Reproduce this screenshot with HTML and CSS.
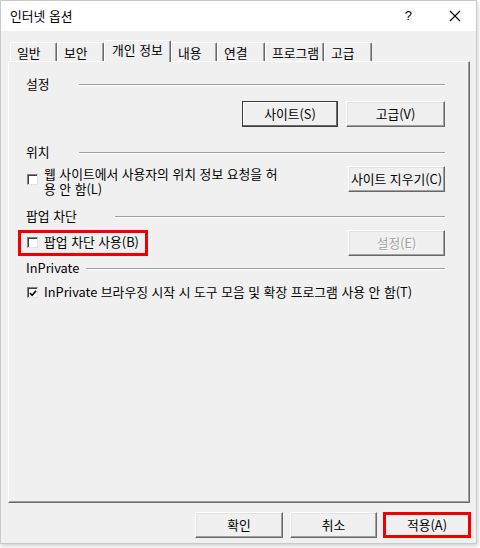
FILE: index.html
```html
<!DOCTYPE html>
<html lang="ko">
<head>
<meta charset="utf-8">
<title>인터넷 옵션</title>
<link rel="stylesheet" href="styles.css">
</head>
<body>
<div class="window">
  <div class="titlebar">
    <span class="title">인터넷 옵션</span>
    <div class="caption-buttons">
      <span class="help">?</span>
      <svg class="close" width="12" height="12" viewBox="0 0 12 12"><path d="M1 1 L11 11 M11 1 L1 11" stroke="#000" stroke-width="1.1" fill="none"/></svg>
    </div>
  </div>
  <div class="client">
    <div class="tabs">
      <div class="tab w47">일반</div>
      <div class="tab w47">보안</div>
      <div class="tab active">개인 정보</div>
      <div class="tab w46">내용</div>
      <div class="tab w48">연결</div>
      <div class="tab w59">프로그램</div>
      <div class="tab w48">고급</div>
    </div>
    <div class="panel">
      <div class="group-head">
        <span class="head-label lw53">설정</span><span class="rule"></span>
      </div>
      <div class="row row-end gap8 mt9">
        <button class="btn default w96">사이트(S)</button>
        <button class="btn w99">고급(V)</button>
      </div>

      <div class="group-head mt17">
        <span class="head-label lw53">위치</span><span class="rule"></span>
      </div>
      <div class="row row-between mt6">
        <label class="check-item">
          <span class="checkbox cb-top"></span>
          <span class="check-text two-line">웹 사이트에서 사용자의 위치 정보 요청을 허<br>용 안 함(L)</span>
        </label>
        <button class="btn w97">사이트 지우기(C)</button>
      </div>

      <div class="group-head mt12">
        <span class="head-label lw89">팝업 차단</span><span class="rule"></span>
      </div>
      <div class="row row-between mt6">
        <label class="check-item highlight">
          <span class="checkbox"></span>
          <span class="check-text">팝업 차단 사용(B)</span>
        </label>
        <button class="btn w97 disabled">설정(E)</button>
      </div>

      <div class="group-head mt4">
        <span class="head-label lw60">InPrivate</span><span class="rule"></span>
      </div>
      <div class="row mt9">
        <label class="check-item">
          <span class="checkbox checked">
            <svg width="9" height="9" viewBox="0 0 9 9"><path d="M1 4 L3.5 6.5 L8 1.5" stroke="#000" stroke-width="1.8" fill="none"/></svg>
          </span>
          <span class="check-text">InPrivate 브라우징 시작 시 도구 모음 및 확장 프로그램 사용 안 함(T)</span>
        </label>
      </div>
    </div>
    <div class="footer">
      <button class="btn w88">확인</button>
      <button class="btn w87">취소</button>
      <button class="btn w88 marked">적용(A)</button>
    </div>
  </div>
</div>
</body>
</html>
```
FILE: styles.css
```css
* { box-sizing: border-box; }
html, body {
  margin: 0;
  padding: 0;
  background: #ffffff;
}
body {
  font-family: "Noto Sans CJK KR", "Noto Sans", sans-serif;
  font-size: 12.8px;
  color: #000;
  width: 480px;
  height: 548px;
  overflow: hidden;
}
.window {
  width: 477px;
  height: 544px;
  border: 1px solid #c9c9c9;
  background: #f0f0f0;
  box-shadow: 1px 2px 4px rgba(0,0,0,0.18);
  display: flex;
  flex-direction: column;
}
.titlebar {
  height: 30px;
  background: #ffffff;
  display: flex;
  align-items: center;
  justify-content: space-between;
  padding-left: 9px;
  padding-right: 15px;
}
.title {
  line-height: 16px;
}
.caption-buttons {
  display: flex;
  align-items: center;
  gap: 37px;
}
.help {
  font-family: "Liberation Sans", sans-serif;
  font-size: 13px;
  line-height: 16px;
}
.close { display: block; }

.client {
  flex: 1;
  padding: 9px 5px 4px 7px;
  display: flex;
  flex-direction: column;
}
.tabs {
  display: flex;
  align-items: flex-end;
  height: 21px;
  padding-left: 2px;
  position: relative;
  z-index: 1;
}
.tab {
  height: 19px;
  border-top: 1px solid #ffffff;
  border-left: 1px solid #ffffff;
  border-right: 1px solid #696969;
  box-shadow: inset -1px 0 0 #a0a0a0;
  border-radius: 2px 2px 0 0;
  padding-left: 6px;
  line-height: 17px;
  padding-top: 1px;
  white-space: nowrap;
  overflow: hidden;
  background: #f0f0f0;
}
.tab.active {
  width: 67px;
  height: 22px;
  margin-bottom: -1px;
  padding-left: 7px;
  padding-top: 0;
  line-height: 17px;
}
.w46 { width: 46px; }
.w47 { width: 47px; }
.w48 { width: 48px; }
.w59 { width: 59px; }

.panel {
  height: 442px;
  width: 462px;
  border-top: 1px solid #ffffff;
  border-left: 1px solid #ffffff;
  border-right: 1px solid #696969;
  border-bottom: 1px solid #696969;
  box-shadow: inset -1px -1px 0 #a0a0a0;
  padding: 14px 24px 0 17px;
}
.group-head {
  display: flex;
  align-items: center;
  height: 16px;
}
.head-label {
  line-height: 16px;
  white-space: nowrap;
  flex: none;
}
.lw53 { width: 53px; }
.lw60 { width: 60px; }
.lw89 { width: 89px; }
.rule {
  flex: 1;
  height: 2px;
  border-top: 1px solid #a0a0a0;
  border-bottom: 1px solid #ffffff;
  margin-top: 2px;
}
.row { display: flex; align-items: flex-start; }
.row-end { justify-content: flex-end; }
.row-between { justify-content: space-between; }
.gap8 { gap: 8px; }
.mt4 { margin-top: 4px; }
.mt6 { margin-top: 6px; }
.mt9 { margin-top: 9px; }
.mt12 { margin-top: 12px; }
.mt17 { margin-top: 17px; }

.btn {
  font: inherit;
  color: #000;
  height: 26px;
  background: #f0f0f0;
  border: 1px solid;
  border-color: #ffffff #696969 #696969 #ffffff;
  box-shadow: inset -1px -1px 0 #a0a0a0, inset 1px 1px 0 #e3e3e3;
  padding: 0;
  line-height: 22px;
  text-align: center;
  white-space: nowrap;
}
.btn.default {
  border-color: #3c3c3c;
  box-shadow: inset -1px -1px 0 #696969, inset 1px 1px 0 #ffffff;
}
.btn.disabled {
  color: #a0a0a0;
  text-shadow: 1px 1px 0 #ffffff;
}
.btn.marked {
  border: 3px solid #f00000;
  box-shadow: none;
  line-height: 20px;
}
.w87 { width: 87px; }
.w88 { width: 88px; }
.w96 { width: 96px; }
.w97 { width: 97px; }
.w99 { width: 99px; }

.check-item {
  display: flex;
  align-items: flex-start;
  gap: 6px;
  padding-left: 1px;
}
.checkbox {
  flex: none;
  width: 11px;
  height: 11px;
  background: #ffffff;
  border: 1px solid;
  border-color: #808080 #e3e3e3 #e3e3e3 #808080;
  box-shadow: inset 1px 1px 0 #404040;
  margin-top: 2px;
  display: flex;
  align-items: center;
  justify-content: center;
}
.checkbox svg { display: block; margin-left: 1px; margin-top: 1px; }
.cb-top { margin-top: 8px; }
.check-text {
  line-height: 14px;
  white-space: nowrap;
}
.two-line { margin-top: 0; line-height: 15px; }
.highlight {
  width: 130px;
  height: 26px;
  margin-left: -8px;
  border: 3px solid #f00000;
  padding: 2px 0 0 6px;
}
.highlight .checkbox { margin-top: 2px; }

.footer {
  margin-top: 9px;
  display: flex;
  justify-content: flex-end;
  gap: 7px;
}
.footer .btn.marked { margin-left: -1px; }
```
